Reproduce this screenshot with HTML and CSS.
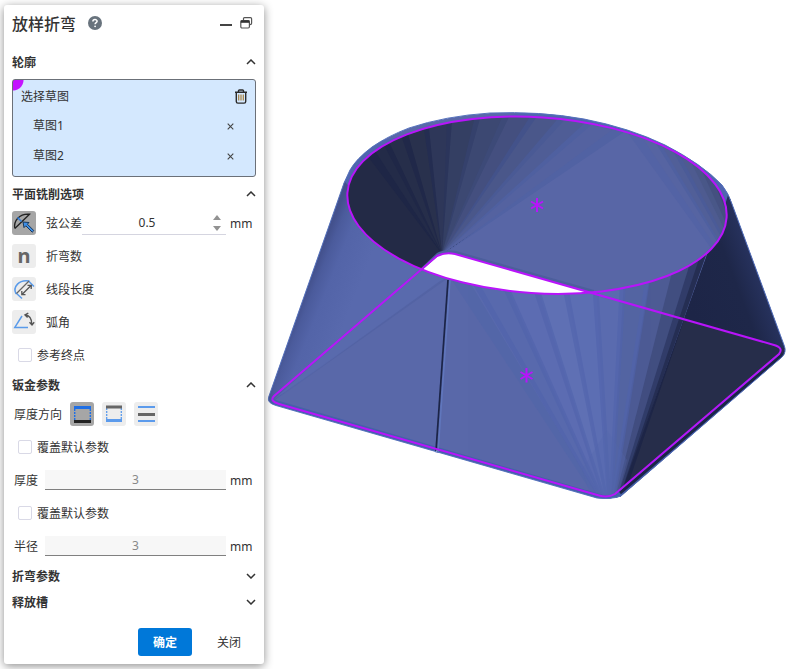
FILE: index.html
```html
<!DOCTYPE html>
<html lang="zh-CN">
<head>
  <meta charset="UTF-8">
  <title>放样折弯</title>
  <link rel="stylesheet" href="styles.css">
</head>
<body>
  <div class="app">
    <form class="panel">
      <div class="panel-header">
        <h1>放样折弯</h1>
        <button type="button" class="icon-btn help-btn" aria-label="帮助">
          <svg width="14" height="14" viewBox="0 0 14 14">
            <circle cx="7" cy="7" r="7" fill="#68737d"/>
            <path d="M4.9 5.4C4.9 3 9.1 3 9.1 5.3C9.1 6.7 7.1 6.6 7.1 8.3" fill="none" stroke="#fff" stroke-width="1.5"/>
            <circle cx="7.1" cy="10.3" r="0.9" fill="#fff"/>
          </svg>
        </button>
        <span class="spacer"></span>
        <button type="button" class="icon-btn" aria-label="最小化">
          <svg width="12" height="14" viewBox="0 0 12 14"><path d="M0 9H12" stroke="#444" stroke-width="2"/></svg>
        </button>
        <button type="button" class="icon-btn window-btn" aria-label="停靠">
          <svg width="13" height="14" viewBox="0 0 13 14" fill="none" stroke="#555" stroke-width="1.2">
            <path d="M3.5 4V2.6Q3.5 1.6 4.5 1.6H10.5Q11.6 1.6 11.6 2.7V7.2Q11.6 8.5 10 8.6"/>
            <rect x="0.8" y="4.6" width="8.6" height="7.4" rx="1.2"/>
            <path d="M0.8 5.6H9.4" stroke="#333" stroke-width="2.4"/>
          </svg>
        </button>
      </div>

      <h2 class="section-title">轮廓 <svg class="chevron" viewBox="0 0 10 6"><path d="M1 5L5 1L9 5"/></svg></h2>
      <div class="selection">
        <div class="selection-row selection-head">
          <span>选择草图</span>
          <button type="button" class="icon-btn" aria-label="清空">
            <svg width="12" height="15" viewBox="0 0 12 15" fill="none" stroke="#2c2c2c" stroke-width="1.4">
              <path d="M0 3.2H12M3.5 3V1.8Q3.5 1 4.4 1H7.6Q8.5 1 8.5 1.8V3M1.3 3.2V12.4Q1.3 14.1 2.9 14.1H9.1Q10.7 14.1 10.7 12.4V3.2"/>
              <path d="M3.7 5.5V11.5M6 5.5V11.5M8.3 5.5V11.5" stroke="#a8813f" stroke-width="1.2"/>
            </svg>
          </button>
        </div>
        <div class="selection-row selection-item">
          <span>草图1</span>
          <button type="button" class="icon-btn" aria-label="移除草图1"><svg width="7" height="7" viewBox="0 0 7 7"><path d="M0.7 0.7L6.3 6.3M6.3 0.7L0.7 6.3" stroke="#444" stroke-width="1.1"/></svg></button>
        </div>
        <div class="selection-row selection-item">
          <span>草图2</span>
          <button type="button" class="icon-btn" aria-label="移除草图2"><svg width="7" height="7" viewBox="0 0 7 7"><path d="M0.7 0.7L6.3 6.3M6.3 0.7L0.7 6.3" stroke="#444" stroke-width="1.1"/></svg></button>
        </div>
      </div>

      <h2 class="section-title">平面铣削选项 <svg class="chevron" viewBox="0 0 10 6"><path d="M1 5L5 1L9 5"/></svg></h2>
      <div class="row option-row">
        <button type="button" class="tool-btn tool-btn-active" aria-label="弦公差">
          <svg width="24" height="24" viewBox="0 0 24 24" fill="none">
            <path d="M2.8 17.5C1.5 10 7 2.5 17.5 3.2L2.8 17.5" stroke="#222" stroke-width="1.3"/>
            <path d="M5.5 6.5L9.5 10.5" stroke="#2b7de0" stroke-width="1.6"/>
            <path d="M11 11L17 11.5L15.4 13.2L21.8 19.6L20.2 21.2L13.8 14.8L12 16.6Z" fill="#3d8fe8" stroke="#16375c" stroke-width="1"/>
          </svg>
        </button>
        <label for="tolerance">弦公差</label>
        <div class="spin-field">
          <input type="text" id="tolerance" value="0.5">
          <div class="spin">
            <button type="button" class="icon-btn" aria-label="增加"><svg width="10" height="5" viewBox="0 0 10 5"><path d="M1 5L5 0L9 5Z" fill="#929292"/></svg></button>
            <button type="button" class="icon-btn" aria-label="减少"><svg width="10" height="5" viewBox="0 0 10 5"><path d="M1 0L5 5L9 0Z" fill="#929292"/></svg></button>
          </div>
        </div>
        <span class="unit">mm</span>
      </div>
      <div class="row option-row">
        <button type="button" class="tool-btn tool-letter" id="bend-count">n</button>
        <label for="bend-count">折弯数</label>
      </div>
      <div class="row option-row">
        <button type="button" class="tool-btn" id="segment-length">
          <svg width="24" height="24" viewBox="0 0 24 24" fill="none">
            <path d="M4 17C0.5 10 7 2 17.500 4M16.500 4L22 9.500M4 16L10 21.500" stroke="#5a9bea" stroke-width="1.5"/>
            <path d="M4.500 16.500L17 4" stroke="#666" stroke-width="1.3"/>
            <path d="M10 17.500L19 8.500M15.500 8.300L19.300 8.300L19.200 12M9.800 14L9.800 17.700L13.500 17.700" stroke="#555" stroke-width="1.3"/>
          </svg>
        </button>
        <label for="segment-length">线段长度</label>
      </div>
      <div class="row option-row">
        <button type="button" class="tool-btn" id="arc-angle">
          <svg width="24" height="24" viewBox="0 0 24 24" fill="none">
            <path d="M10 6L2.800 17.400H16" stroke="#5a9bea" stroke-width="1.5"/>
            <path d="M13.500 5C17.500 5.500 19.800 9 19.800 14.500M16.300 3.200L13 5L15.600 7.600M17.500 12.300L20 15L22.200 12.200" stroke="#555" stroke-width="1.4"/>
          </svg>
        </button>
        <label for="arc-angle">弧角</label>
      </div>
      <div class="row check-row">
        <input type="checkbox" id="ref-end"><label for="ref-end">参考终点</label>
      </div>

      <h2 class="section-title">钣金参数 <svg class="chevron" viewBox="0 0 10 6"><path d="M1 5L5 1L9 5"/></svg></h2>
      <div class="row direction-row">
        <span>厚度方向</span>
        <button type="button" class="tool-btn tool-btn-active" aria-label="向内">
          <svg width="24" height="24" viewBox="0 0 24 24">
            <path d="M4.700 7V18M20.300 7V18" stroke="#1f6fe5" stroke-width="1.4" stroke-dasharray="2 1"/>
            <rect x="4" y="4" width="17" height="3" fill="#1f6fe5"/>
            <rect x="4" y="18" width="17" height="3" fill="#222"/>
          </svg>
        </button>
        <button type="button" class="tool-btn" aria-label="向外">
          <svg width="24" height="24" viewBox="0 0 24 24">
            <path d="M4.700 6V18M19.300 6V18" stroke="#5c9bec" stroke-width="1.3" stroke-dasharray="2 1"/>
            <rect x="4" y="3.500" width="16" height="3" fill="#666"/>
            <rect x="4" y="17" width="16" height="3" fill="#5c9bec"/>
          </svg>
        </button>
        <button type="button" class="tool-btn" aria-label="对称">
          <svg width="24" height="24" viewBox="0 0 24 24">
            <rect x="4" y="4" width="17" height="2" fill="#5c9bec"/>
            <rect x="4" y="11" width="17" height="3" fill="#666"/>
            <rect x="4" y="18" width="17" height="2" fill="#5c9bec"/>
          </svg>
        </button>
      </div>
      <div class="row check-row">
        <input type="checkbox" id="override-thickness"><label for="override-thickness">覆盖默认参数</label>
      </div>
      <div class="row value-row">
        <label for="thickness">厚度</label>
        <input type="text" id="thickness" value="3" disabled>
        <span class="unit">mm</span>
      </div>
      <div class="row check-row">
        <input type="checkbox" id="override-radius"><label for="override-radius">覆盖默认参数</label>
      </div>
      <div class="row value-row">
        <label for="radius">半径</label>
        <input type="text" id="radius" value="3" disabled>
        <span class="unit">mm</span>
      </div>

      <h2 class="section-title">折弯参数 <svg class="chevron" viewBox="0 0 10 6"><path d="M1 1L5 5L9 1"/></svg></h2>
      <h2 class="section-title">释放槽 <svg class="chevron" viewBox="0 0 10 6"><path d="M1 1L5 5L9 1"/></svg></h2>

      <div class="panel-footer">
        <button type="button" class="btn btn-primary">确定</button>
        <button type="button" class="btn">关闭</button>
      </div>
    </form>

    <main class="viewport">
      <svg class="model" viewBox="264 0 529 669">
        <defs>
          <path id="body" d="M268.500 397.500L330 223L344 183L350 170Q356 159 372 147Q388 136 409 128Q445 116 490 113Q540 111 584 119Q630 128 665 145Q702 164 722 185Q729 194 732 204L784 345Q787 352 782 357L621 496Q612 499.500 597 498L276 405.500Q267 403 268.500 397.500Z"/>
          <ellipse id="rim" cx="537" cy="205.200" rx="190" ry="88" transform="rotate(3.740 537 205.200)"/>
          <clipPath id="body-clip"><use href="#body"/></clipPath>
          <clipPath id="rim-clip"><use href="#rim"/></clipPath>
          <linearGradient id="left-side" gradientUnits="userSpaceOnUse" x1="305" y1="292" x2="350" y2="310">
            <stop offset="0" stop-color="#43518d"/>
            <stop offset="0.150" stop-color="#4b5b9c"/>
            <stop offset="0.400" stop-color="#5364a8"/>
            <stop offset="1" stop-color="#5869ad"/>
          </linearGradient>
          <linearGradient id="right-side" gradientUnits="userSpaceOnUse" x1="690" y1="310" x2="760" y2="284">
            <stop offset="0" stop-color="#1d2547"/>
            <stop offset="0.700" stop-color="#1e2749"/>
            <stop offset="1" stop-color="#26315c"/>
          </linearGradient>
        </defs>

        <!-- outer faces, each one painted over the rest of the fan -->
        <g clip-path="url(#body-clip)">
          <use href="#body" fill="#5968a9"/>
          <path d="M330 160L360 145L560 105L700 150L735 190L727 215L537 120L347 196Z" fill="#4f66ae"/>
          <path d="M262 402L335 170L352 190L420 262L449 276L272 402Z" fill="url(#left-side)"/>
          <path d="M272 401L420 269L449 276Z" fill="#596aad"/>
          <path d="M274 401L440 281L451 276Z" fill="#5363a4"/>
          <path d="M596 499L449 276H480L720 215L620 499Z" fill="#5466a9"/>
          <path d="M600 499L466 276H480L720 215L620 499Z" fill="#596aad"/>
          <path d="M602 499L504 280L720 215L620 499Z" fill="#5c6db2"/>
          <path d="M604 499L535 280L720 215L620 499Z" fill="#5f70b5"/>
          <path d="M606 499L565 280L720 215L620 499Z" fill="#5d6eb3"/>
          <path d="M608 499L596 280L720 215L620 499Z" fill="#5b6baf"/>
          <path d="M611 499L624 280L720 215L620 499Z" fill="#5465a2"/>
          <path d="M613 499L650 274L720 215L620 499Z" fill="#4d5b94"/>
          <path d="M615 499L673 268L720 215L620 499Z" fill="#414e80"/>
          <path d="M617 499L691 260L720 215L620 499Z" fill="#313c69"/>
          <path d="M619 499L700 256L720 215L620 499Z" fill="#252e53"/>
          <g fill="#5063ac" opacity="0.600">
            <path d="M599 499L468 276H475L602 499Z"/>
            <path d="M601 499L499 280H506L604 499Z"/>
            <path d="M603 499L530 280H537L606 499Z"/>
            <path d="M605 499L561 280H567L608 499Z"/>
            <path d="M607 499L592 280H598L611 499Z"/>
            <path d="M609 499L620 280H626L613 499Z"/>
            <path d="M611 499L646 274H651L615 499Z"/>
          </g>
          <path d="M592 499L582 470L607 430L627 460L617 499Z" fill="#5366ad" opacity="0.300"/>
          <path d="M619 499L710 246L722 215L728 195L733 190L795 350Z" fill="url(#right-side)"/>
          <path d="M623 499L684 320L778 347L792 350L625 505Z" fill="#262d4a"/>
          <path d="M729 198L784 348L738 200Z" fill="#2c3866"/>
          <path d="M270 401L598 496Q608 500 618 495L781 355" fill="none" stroke="#4560aa" stroke-width="5"/>
          <path d="M620 493L783 354" fill="none" stroke="#1d2547" stroke-width="3"/>
        </g>
        <use href="#body" fill="none" stroke="#5672bd" stroke-width="1"/>

        <!-- inner faces -->
        <g clip-path="url(#rim-clip)">
          <use href="#rim" fill="#5866a6"/>
          <path d="M442 254L430 310L330 290V60H700L619 132Z" fill="#232a46"/>
          <path d="M442 254L366 154L340 60H700L619 132Z" fill="#1e2646"/>
          <path d="M442 254L375 151L340 60H700L619 132Z" fill="#232b48"/>
          <path d="M442 254L385 147L340 60H700L619 132Z" fill="#1f2747"/>
          <path d="M442 254L390 144L340 60H700L619 132Z" fill="#262e4a"/>
          <path d="M442 254L402 138L340 60H700L619 132Z" fill="#202849"/>
          <path d="M442 254L408 134L340 60H700L619 132Z" fill="#29314d"/>
          <path d="M442 254L424 129L340 60H700L619 132Z" fill="#242d51"/>
          <path d="M442 254L429 128L340 60H700L619 132Z" fill="#2e3759"/>
          <path d="M442 254L447 121L340 60H700L619 132Z" fill="#2b355b"/>
          <path d="M442 254L452 120L340 60H700L619 132Z" fill="#343f63"/>
          <path d="M442 254L475 116L340 60H700L619 132Z" fill="#35416c"/>
          <path d="M442 254L481 115L340 60H700L619 132Z" fill="#3c4872"/>
          <path d="M442 254L504 113L340 60H700L619 132Z" fill="#3d4a78"/>
          <path d="M442 254L511 113L340 60H700L619 132Z" fill="#444f7f"/>
          <path d="M442 254L533 112L340 60H700L619 132Z" fill="#43528a"/>
          <path d="M442 254L540 112L340 60H700L619 132Z" fill="#4a578a"/>
          <path d="M442 254L561 115L340 60H700L619 132Z" fill="#4a5a95"/>
          <path d="M442 254L569 115L340 60H700L619 132Z" fill="#4f5d96"/>
          <path d="M442 254L588 120L340 60H700L619 132Z" fill="#4f60a0"/>
          <path d="M442 254L597 120L340 60H700L619 132Z" fill="#5462a0"/>
          <path d="M444 254L612 130L340 60H700L624 132Z" fill="#5162a3"/>

          <path d="M784 349L622 125L780 100Z" fill="#5363a5"/>
          <path d="M784 349L637 130L780 100Z" fill="#5664a2"/>
          <path d="M784 349L650 134L780 100Z" fill="#4f60a0"/>
          <path d="M784 349L657 138L780 100Z" fill="#515f98"/>
          <path d="M784 349L669 144L780 100Z" fill="#4b5b98"/>
          <path d="M784 349L675 146L780 100Z" fill="#4e5b90"/>
          <path d="M784 349L687 154L780 100Z" fill="#495788"/>
          <path d="M784 349L697 160L780 100Z" fill="#445080"/>
          <path d="M784 349L708 168L780 100Z" fill="#3b4774"/>
          <!-- opening through the part -->
          <path d="M419 270L437 253Q444 249 456 251L594 290L590 310H420Z" fill="#4c5f9c"/>
          <path d="M421 271L438 256Q445 252 455 254L592 293L590 310H420Z" fill="#fff"/>
        </g>

        <!-- seam -->
        <path d="M450 280L438 453" stroke="#6077bd" stroke-width="1.500"/>
        <path d="M448 280L436 451" stroke="#1b2447" stroke-width="1.700"/>

        <!-- sketch curves -->
        <g class="sketch">
          <use href="#rim"/>
          <path d="M274 396L437 256Q445 252 455 254L774 345Q784 348 779 354L615 494Q608 498 599 495.500L279 404Q269 401 274 396Z"/>
          <path d="M537 198V212M531 201.500L543 208.500M543 201.500L531 208.500"/>
          <path d="M526.500 368V382.500M520.500 372L532.500 379M532.500 372L520.500 379"/>
        </g>
        <path d="M436 453L437 450" stroke="#8b9bd2" stroke-width="1"/>
      </svg>
    </main>
  </div>
</body>
</html>
```

FILE: styles.css
```css
* {
  box-sizing: border-box;
}

body {
  margin: 0;
  background: #fff;
  color: #333;
  font-family: "Noto Sans", "Noto Sans CJK SC", sans-serif;
  font-size: 12px;
  line-height: 18px;
}

button,
input {
  font: inherit;
  color: inherit;
}

.app {
  display: flex;
  align-items: flex-start;
}

.panel {
  position: relative;
  z-index: 1;
  flex: none;
  width: 260px;
  margin: 5px 0 5px 4px;
  padding: 0 8px 8px;
  background: #fff;
  border-radius: 3px;
  box-shadow: 0 2px 10px rgba(0, 0, 0, 0.45);
}

.viewport {
  flex: 1;
  min-width: 0;
}

.model {
  display: block;
  width: 100%;
  height: auto;
}

.sketch {
  fill: none;
  stroke: #b814fa;
  stroke-width: 2;
}

.icon-btn {
  display: flex;
  padding: 0;
  border: none;
  background: none;
  cursor: pointer;
}

.panel-header {
  display: flex;
  align-items: center;
  height: 36px;
  margin-bottom: 8px;
}

.panel-header h1 {
  margin: 0;
  padding-top: 2px;
  font-size: 16px;
  font-weight: 500;
  line-height: 24px;
}

.help-btn {
  margin-left: 12px;
}

.spacer {
  flex: 1;
}

.window-btn {
  margin: 0 3px 0 8px;
}

.section-title {
  display: flex;
  align-items: center;
  justify-content: space-between;
  height: 26px;
  margin: 0;
  padding-top: 1px;
  font-size: 12px;
  font-weight: 700;
}

.chevron {
  width: 10px;
  height: 6px;
  margin-bottom: 2px;
  fill: none;
  stroke: #333;
  stroke-width: 1.5;
}

.selection {
  margin: 4px 0;
  padding: 1px 8px 5px;
  border: 1px solid #6b7078;
  border-radius: 3px;
  background: radial-gradient(circle at 0 0, #c414ff 10px, #d4e8fe 11px);
}

.selection-row {
  display: flex;
  align-items: center;
  justify-content: space-between;
  height: 30px;
}

.selection-head {
  padding-top: 1px;
}

.selection-head svg {
  margin-bottom: 1px;
}

.selection-item {
  padding: 0 13px 0 12px;
}

.row {
  display: flex;
  align-items: center;
  height: 33px;
}

.tool-btn {
  display: flex;
  align-items: center;
  justify-content: center;
  width: 24px;
  height: 24px;
  margin-bottom: 1px;
  padding: 0;
  border: none;
  border-radius: 3px;
  background: #ededed;
  cursor: pointer;
}

.tool-btn-active {
  background: #a6a6a6;
}

.tool-letter {
  color: #666;
  font-size: 20px;
  font-weight: 700;
  line-height: 20px;
}

.option-row label {
  margin-left: 10px;
}

.spin-field {
  display: flex;
  flex: 1;
  align-items: center;
  min-width: 0;
  height: 24px;
  margin-bottom: 1px;
  padding-right: 4px;
  border-bottom: 1px solid #d5d5e0;
}

.spin-field input {
  flex: 1;
  width: 0;
  padding: 1px 0 0;
  border: none;
  background: none;
  text-align: center;
}

.spin {
  display: flex;
  flex-direction: column;
  gap: 6px;
}

.unit {
  width: 26px;
  margin-left: 4px;
  padding-top: 1px;
}

.check-row {
  gap: 5px;
  padding-left: 6px;
}

.check-row input {
  appearance: none;
  width: 14px;
  height: 14px;
  margin: 0 0 1px;
  border: 1px solid #d9d9e6;
  border-radius: 2px;
  background: #fff;
}

.direction-row {
  gap: 8px;
  padding-left: 2px;
}

.value-row {
  padding-left: 2px;
}

.value-row input {
  flex: 1;
  width: 0;
  height: 20px;
  margin: 0 0 1px 7px;
  padding: 0;
  border: none;
  border-bottom: 1px solid #808080;
  background: #f7f7f7;
  color: #888;
  text-align: center;
}

.panel-footer {
  display: flex;
  justify-content: flex-end;
  gap: 10px;
  padding-top: 13px;
}

.btn {
  width: 54px;
  height: 28px;
  padding: 2px 0 0;
  border: none;
  border-radius: 3px;
  background: none;
  cursor: pointer;
}

.btn-primary {
  background: #0078d9;
  color: #fff;
  font-weight: 700;
}
```
